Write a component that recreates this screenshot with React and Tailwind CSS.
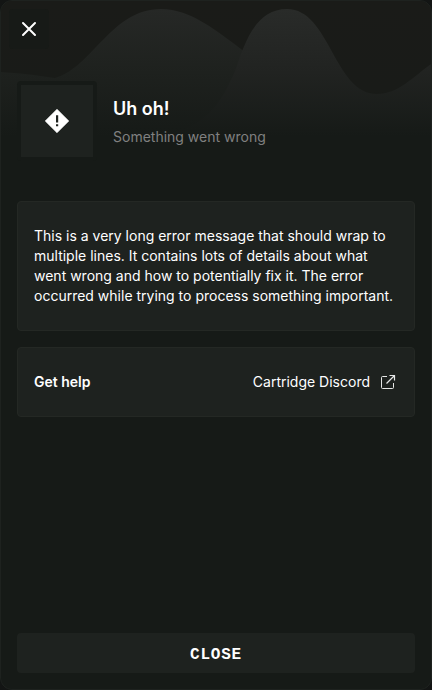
function CloseIcon() {
  return (
    <svg className="size-6" viewBox="0 0 24 24" fill="none" stroke="white" strokeWidth="2" strokeLinecap="round" aria-hidden="true">
      <path d="M6 6L18 18M18 6L6 18" />
    </svg>
  );
}

function AlertIcon() {
  return (
    <svg className="size-9" viewBox="0 0 36 36" aria-hidden="true">
      <path d="M18 6.2L29.8 18L18 29.8L6.2 18Z" fill="white" stroke="white" strokeWidth="0.6" strokeLinejoin="round" />
      <path d="M17 12.2h2.2v7.4H17zM17 21.2h2.2v2.1H17z" fill="#1e221f" />
    </svg>
  );
}

function ExternalIcon() {
  return (
    <svg className="size-5" viewBox="0 0 20 20" fill="none" stroke="#e6e7e6" aria-hidden="true">
      <path d="M9 4.5H4.5Q3.5 4.5 3.5 5.5V15.5Q3.5 16.5 4.5 16.5H14.5Q15.5 16.5 15.5 15.5V11" />
      <path d="M11.5 3.5H16.5V8.5M16.5 3.5L8.5 11.5" strokeWidth="1.2" />
    </svg>
  );
}

function Waves() {
  return (
    <svg className="absolute inset-0 size-full" viewBox="0 0 430 135" preserveAspectRatio="none" aria-hidden="true">
      <defs>
        <linearGradient id="base" x1="0" y1="0" x2="0" y2="135" gradientUnits="userSpaceOnUse">
          <stop offset="0" stopColor="#1a1b18" />
          <stop offset="0.65" stopColor="#191b18" />
          <stop offset="1" stopColor="#161a17" />
        </linearGradient>
        <linearGradient id="wave" x1="0" y1="8" x2="0" y2="135" gradientUnits="userSpaceOnUse">
          <stop offset="0" stopColor="#292b29" />
          <stop offset="0.5" stopColor="#212321" />
          <stop offset="1" stopColor="#161a17" />
        </linearGradient>
        <linearGradient id="rear" x1="0" y1="8" x2="0" y2="135" gradientUnits="userSpaceOnUse">
          <stop offset="0" stopColor="#262826" />
          <stop offset="0.5" stopColor="#1e211e" />
          <stop offset="1" stopColor="#161a17" />
        </linearGradient>
      </defs>
      <rect width="430" height="135" fill="url(#base)" />
      <path d="M0 71C18 72 34 74 54 77C92 66 110 8 160 8C190 8 216 30 244 51C262 75 280 110 310 135H0Z" fill="url(#rear)" />
      <path d="M150 135C205 130 220 102 234 70C242 48 252 8 286 8C329 8 333 93 376 93C397 93 412 76 430 63V135Z" fill="url(#wave)" />
    </svg>
  );
}

export default function App() {
  return (
    <div className="min-h-screen bg-[#131514] font-['Inter',sans-serif] text-white">
      <main className="flex min-h-screen flex-col overflow-hidden rounded-xl border border-[#1e221f] bg-[#161a17]">
        <header className="relative h-[172px] shrink-0">
          <div className="absolute inset-x-0 top-0 h-[135px]">
            <Waves />
          </div>
          <div className="relative flex flex-col gap-8 px-4 pt-2">
            <button type="button" aria-label="Close dialog" className="-ml-2 flex size-10 items-center justify-center rounded bg-[#171a17]">
              <CloseIcon />
            </button>
            <div className="flex items-center gap-4">
              <div className="flex size-20 shrink-0 items-center justify-center rounded border-4 border-[#161a17] bg-[#1e221f]">
                <AlertIcon />
              </div>
              <div className="flex flex-col gap-1 pt-1">
                <h1 className="text-lg leading-6 font-semibold">Uh oh!</h1>
                <p className="text-sm leading-6 text-[#808080]">Something went wrong</p>
              </div>
            </div>
          </div>
        </header>

        <div className="flex flex-1 flex-col gap-4 px-4 pt-7">
          <section className="rounded border border-[#242824] bg-[#1e221f] px-4 py-6">
            <p className="text-sm leading-5">
              This is a very long error message that should wrap to multiple lines. It contains lots of details about what went wrong and how to potentially fix it. The error occurred while trying to process something important.
            </p>
          </section>
          <section className="flex items-center justify-between rounded border border-[#242824] bg-[#1e221f] px-4 py-6 text-sm leading-5">
            <h2 className="font-semibold">Get help</h2>
            <a href="#discord" className="flex items-center gap-2">
              Cartridge Discord
              <ExternalIcon />
            </a>
          </section>
        </div>

        <footer className="p-4">
          <button type="button" className="h-10 w-full rounded bg-[#1e221f] pt-1 font-['Liberation_Mono',monospace] text-base font-semibold tracking-wider">
            CLOSE
          </button>
        </footer>
      </main>
    </div>
  );
}
